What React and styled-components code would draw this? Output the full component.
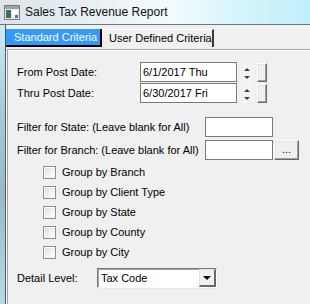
import React from "react";
import styled, { createGlobalStyle } from "styled-components";

const Global = createGlobalStyle`
  html, body { margin: 0; padding: 0; background: #f0f0f0; overflow: hidden; }
  * { box-sizing: border-box; }
`;

const Window = styled.div`
  width: 310px;
  height: 304px;
  display: flex;
  flex-direction: column;
  background: #f0f0f0;
  font-family: "Liberation Sans", Arial, sans-serif;
  font-size: 11px;
  color: #000;
  overflow: hidden;
`;

const TitleBar = styled.div`
  height: 25px;
  flex: none;
  display: flex;
  align-items: center;
  padding-left: 4px;
  gap: 5px;
  background: linear-gradient(90deg, #dce4ea 0%, #eaf2f6 35%, #f3fbfd 55%, #d8f5fb 75%, #bfeffa 100%);
  border-bottom: 1px solid #6f7880;
`;

const TitleText = styled.span`
  font-family: "Liberation Sans", Arial, sans-serif;
  font-size: 12px;
  color: #111;
  padding-bottom: 1px;
`;

const Body = styled.div`
  flex: 1;
  display: flex;
`;

const Frame = styled.div`
  width: 6px;
  flex: none;
  background: linear-gradient(180deg, #c9eef4 0%, #a9c9d6 30%, #9cb8c8 60%, #b4dbe2 100%);
  border-right: 1px solid #4a5660;
`;

const Main = styled.div`
  flex: 1;
  display: flex;
  flex-direction: column;
`;

const TabRow = styled.div`
  display: flex;
  padding-top: 4px;
  height: 24px;
  flex: none;
`;

const Tab = styled.div`
  height: 18px;
  display: flex;
  align-items: center;
  white-space: nowrap;
  padding-left: ${(p) => (p.$active ? "8px" : "7px")};
  width: ${(p) => p.$w}px;
  background: ${(p) => (p.$active ? "#3399ff" : "#f0f0f0")};
  color: ${(p) => (p.$active ? "#fff" : "#000")};
  border-right: 2px solid ${(p) => (p.$active ? "#000" : "#3a3a3a")};
  border-bottom: ${(p) => (p.$active ? "2px solid #000" : "none")};
  border-top: ${(p) => (p.$active ? "none" : "1px solid #fff")};
  padding-bottom: ${(p) => (p.$active ? "0" : "2px")};
`;

const Panel = styled.div`
  flex: 1;
  border-top: 1px solid #a0a0a0;
  border-left: 1px solid #ffffff;
  box-shadow: inset 1px 0 0 #a0a0a0, inset 0 1px 0 #ffffff;
  padding: 12px 0 0 10px;
  display: flex;
  flex-direction: column;
`;

const Row = styled.div`
  display: flex;
  align-items: center;
  height: 20px;
  margin-top: ${(p) => p.$mt || 0}px;
`;

const Label = styled.div`
  width: ${(p) => p.$w}px;
  flex: none;
  white-space: nowrap;
`;

const TextBox = styled.div`
  width: ${(p) => p.$w}px;
  height: 20px;
  flex: none;
  background: #fff;
  border: 1px solid #7a7a7a;
  padding-left: 2px;
  display: flex;
  align-items: center;
  white-space: nowrap;
`;

const Spin = styled.div`
  width: 12px;
  height: 19px;
  margin-left: 4px;
  display: flex;
  flex-direction: column;
  justify-content: space-between;
  align-items: center;
  padding: 5px 0 3px;
  background: #f3f3f3;
`;

const Arrow = styled.div`
  width: 0;
  height: 0;
  border-left: 3px solid transparent;
  border-right: 3px solid transparent;
  ${(p) => (p.$down ? "border-top: 3px solid #444;" : "border-bottom: 3px solid #444;")}
`;

const RaisedButton = styled.div`
  width: ${(p) => p.$w}px;
  height: ${(p) => p.$h}px;
  margin-left: ${(p) => p.$ml}px;
  flex: none;
  background: #f0f0f0;
  border-top: 1px solid #fff;
  border-left: 1px solid #fff;
  border-right: 1px solid #696969;
  border-bottom: 1px solid #696969;
  box-shadow: inset -1px -1px 0 #a0a0a0, inset 1px 1px 0 #e3e3e3;
  display: flex;
  align-items: center;
  justify-content: center;
  font-size: 11px;
  padding-bottom: 2px;
`;

const CheckRow = styled.div`
  display: flex;
  align-items: center;
  height: 20px;
  padding-left: 26px;
  gap: 6px;
`;

const CheckBox = styled.div`
  width: 13px;
  height: 13px;
  flex: none;
  border: 1px solid #8e8f8f;
  background: linear-gradient(135deg, #dcdcdc 0%, #f4f4f4 60%, #ffffff 100%);
  box-shadow: inset 1px 1px 0 #fff;
`;

const Combo = styled.div`
  width: 120px;
  height: 20px;
  margin-left: 0;
  flex: none;
  display: flex;
  background: #fff;
  border-top: 1px solid #7a7a7a;
  border-left: 1px solid #7a7a7a;
  border-right: 1px solid #fff;
  border-bottom: 1px solid #fff;
  box-shadow: inset 1px 1px 0 #a0a0a0, 1px 1px 0 #e8e8e8;
`;

const ComboText = styled.div`
  flex: 1;
  padding-left: 3px;
  display: flex;
  align-items: center;
`;

const ComboButton = styled.div`
  width: 17px;
  height: 18px;
  margin-top: 0;
  background: #f0f0f0;
  border-top: 1px solid #e3e3e3;
  border-left: 1px solid #e3e3e3;
  border-right: 2px solid #696969;
  border-bottom: 2px solid #696969;
  display: flex;
  align-items: center;
  justify-content: center;
`;

const ComboArrow = styled.div`
  width: 0;
  height: 0;
  border-left: 4px solid transparent;
  border-right: 4px solid transparent;
  border-top: 4px solid #000;
`;

const AppIcon = () => (
  <svg width="16" height="15" viewBox="0 0 16 15">
    <rect x="0.5" y="0.5" width="15" height="14" fill="#e8e8e8" stroke="#7d7d7d" />
    <rect x="1" y="1" width="14" height="3" fill="#9aa3ab" />
    <rect x="2" y="5" width="5" height="8" fill="#3e6e55" />
    <rect x="8" y="5" width="6" height="8" fill="#ffffff" />
    <rect x="11" y="10" width="3" height="3" fill="#2a7fd4" />
  </svg>
);

const groups = ["Group by Branch", "Group by Client Type", "Group by State", "Group by County", "Group by City"];

export default function App() {
  return (
    <>
      <Global />
      <Window>
        <TitleBar>
          <AppIcon />
          <TitleText>Sales Tax Revenue Report</TitleText>
        </TitleBar>
        <Body>
          <Frame />
          <Main>
            <TabRow>
              <Tab $active $w={96}>Standard Criteria</Tab>
              <Tab $w={112}>User Defined Criteria</Tab>
            </TabRow>
            <Panel>
              <Row>
                <Label $w={123}>From Post Date:</Label>
                <TextBox $w={97}>6/1/2017 Thu</TextBox>
                <Spin><Arrow /><Arrow $down /></Spin>
                <RaisedButton $w={10} $h={19} $ml={4} />
              </Row>
              <Row $mt={1}>
                <Label $w={123}>Thru Post Date:</Label>
                <TextBox $w={97}>6/30/2017 Fri</TextBox>
                <Spin><Arrow /><Arrow $down /></Spin>
                <RaisedButton $w={10} $h={19} $ml={4} />
              </Row>
              <Row $mt={14}>
                <Label $w={188}>Filter for State: (Leave blank for All)</Label>
                <TextBox $w={68} />
              </Row>
              <Row $mt={3}>
                <Label $w={188}>Filter for Branch: (Leave blank for All)</Label>
                <TextBox $w={68} />
                <RaisedButton $w={25} $h={20} $ml={1}>...</RaisedButton>
              </Row>
              <div style={{ height: 2 }} />
              {groups.map((g) => (
                <CheckRow key={g}>
                  <CheckBox />
                  <span>{g}</span>
                </CheckRow>
              ))}
              <Row $mt={6}>
                <Label $w={80}>Detail Level:</Label>
                <Combo>
                  <ComboText>Tax Code</ComboText>
                  <ComboButton><ComboArrow /></ComboButton>
                </Combo>
              </Row>
            </Panel>
          </Main>
        </Body>
      </Window>
    </>
  );
}
